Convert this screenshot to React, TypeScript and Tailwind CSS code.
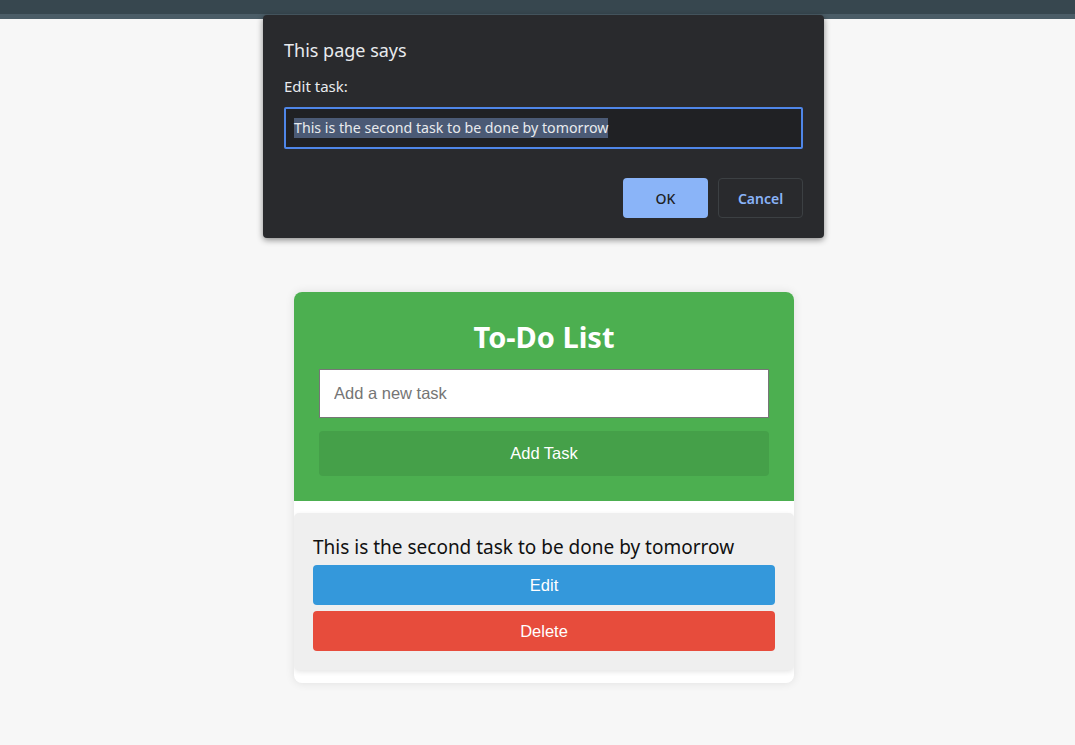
import React from "react";

export default function App() {
  const task = "This is the second task to be done by tomorrow";
  return (
    <div className="relative min-h-[745px] w-full overflow-hidden bg-[#f7f7f7]" style={{ fontFamily: "'Liberation Sans', Arial, sans-serif" }}>
      <div className="h-[14px] bg-[#37474f]" />
      <div className="h-[5px] bg-[#4b5d67]" />

      <div className="pl-[294px] pt-[273px]">
        <div className="w-[500px] overflow-hidden rounded-[8px] bg-white shadow-[0_0_10px_rgba(0,0,0,0.1)]">
          <div className="flex flex-col bg-[#4caf50] px-[25px] pb-[25px] pt-[27px]">
            <h1 className="mb-[14px] text-center text-[29px] font-bold leading-[36px] text-white" style={{ fontFamily: "'Noto Sans', sans-serif" }}>
              To-Do List
            </h1>
            <input
              readOnly
              placeholder="Add a new task"
              className="h-[49px] w-full border border-[#767676] bg-white px-[14px] text-[16.5px] text-black placeholder:text-[#757575] outline-none"
            />
            <button className="mt-[13px] h-[45px] w-full rounded-[4px] bg-[#45a049] text-[16.5px] text-white">Add Task</button>
          </div>
          <div className="pt-[12px] pb-[13px]">
            <div className="rounded-[5px] bg-[#efefef] px-[19px] pb-[19px] pt-[20px] shadow-[0_2px_5px_rgba(0,0,0,0.1)]">
              <div className="mb-[4px] text-[19px] leading-[28px] text-[#111]" style={{ fontFamily: "'Noto Sans', sans-serif" }}>
                {task}
              </div>
              <button className="h-[40px] w-full rounded-[4px] bg-[#3498db] text-[16.5px] text-white">Edit</button>
              <button className="mt-[6px] h-[40px] w-full rounded-[4px] bg-[#e74c3c] text-[16.5px] text-white">Delete</button>
            </div>
          </div>
        </div>
      </div>

      <div
        className="absolute left-[263px] top-[15px] flex h-[223px] w-[561px] flex-col rounded-[4px] bg-[#292a2d] px-[21px] shadow-[0_2px_6px_rgba(0,0,0,0.45)]"
        style={{ fontFamily: "'Noto Sans', sans-serif" }}
      >
        <div className="mt-[22px] text-[18px] leading-[26px] text-[#e8eaed]">This page says</div>
        <div className="mt-[13px] text-[15px] leading-[21px] text-[#e8eaed]">Edit task:</div>
        <div className="mt-[10px] flex h-[42px] items-center rounded-[2px] border-2 border-[#4f86e8] bg-[#202124] px-[8px]">
          <span className="bg-[#4b5a75] text-[14.2px] leading-[20px] text-[#e8eaed]">{task}</span>
        </div>
        <div className="mt-[29px] flex justify-end gap-[10px]">
          <button className="h-[40px] w-[85px] rounded-[4px] bg-[#8ab4f8] text-[14px] font-medium text-[#202124]">OK</button>
          <button className="h-[40px] w-[85px] rounded-[4px] border border-[#3c4043] text-[14px] font-semibold text-[#8ab4f8]">Cancel</button>
        </div>
      </div>
    </div>
  );
}
